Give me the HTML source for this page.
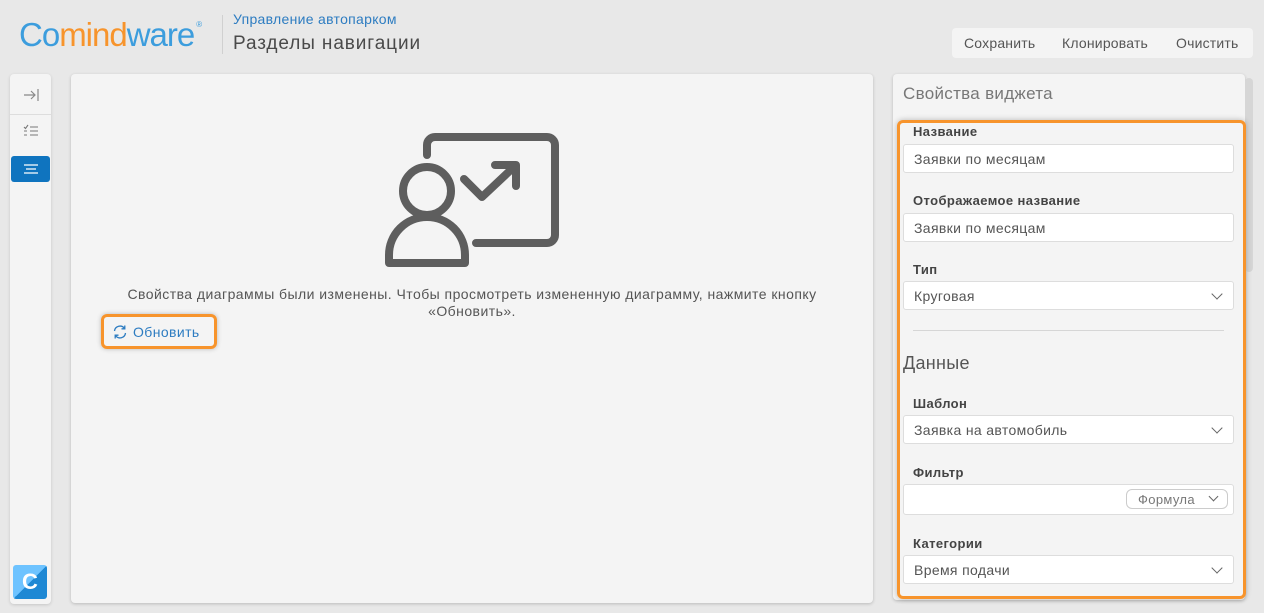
<!DOCTYPE html>
<html><head><meta charset="utf-8"><style>
*{box-sizing:border-box;margin:0;padding:0}
body{width:1264px;height:613px;overflow:hidden;background:#e8e8e8;font-family:"Liberation Sans",sans-serif;position:relative;color:#333}
.abs{position:absolute}
.logo{left:19px;top:16px;font-size:33px;letter-spacing:-1px;color:#3c9ddd}
.logo span{color:#f7942c}
.logo sup{font-size:8px;color:#3c9ddd;vertical-align:top;position:relative;top:4px;left:2px}
.sep{left:222px;top:15px;width:1px;height:39px;background:#d0d0d0}
.t1{left:233px;top:11px;font-size:14px;color:#2d7cc1;letter-spacing:.3px}
.t2{left:233px;top:33px;font-size:19px;color:#4a4a4a;letter-spacing:.9px}
.btns{left:952px;top:28px;width:301px;height:30px;background:#f4f4f4;border-radius:4px;font-size:14px;color:#555;letter-spacing:.2px}
.btns span{position:absolute;top:7px}
.side{left:10px;top:74px;width:41px;height:530px;background:#f4f4f4;border-radius:4px;box-shadow:0 1px 3px rgba(0,0,0,.15)}
.main{left:71px;top:74px;width:802px;height:529px;background:#f4f4f4;border-radius:4px;box-shadow:0 1px 3px rgba(0,0,0,.2)}
.right{left:893px;top:74px;width:352px;height:526px;background:#f4f4f4;border-radius:4px;box-shadow:0 1px 3px rgba(0,0,0,.2)}
.scroll{left:1245px;top:78px;width:8px;height:194px;background:#d6d6d6;border-radius:4px}
.orange{left:897px;top:120px;width:349px;height:479px;border:3px solid #f7942c;border-radius:6px;box-shadow:0 0 6px rgba(0,0,0,.25)}
.lbl{font-size:13px;font-weight:bold;color:#444;left:913px;letter-spacing:.4px}
.inp{left:903px;width:331px;height:29px;background:#fff;border:1px solid #ddd;border-radius:3px;font-size:14px;color:#555;padding:6px 0 0 10px;letter-spacing:.35px}
.chev{position:absolute;right:12px;top:8px;width:8px;height:8px;border-right:1.3px solid #666;border-bottom:1.3px solid #666;transform:rotate(45deg)}
</style></head><body>
<div class="abs logo">Co<span>mind</span>ware<sup>®</sup></div>
<div class="abs sep"></div>
<div class="abs t1">Управление автопарком</div>
<div class="abs t2">Разделы навигации</div>
<div class="abs btns"><span style="left:12px">Сохранить</span><span style="left:110px">Клонировать</span><span style="left:224px">Очистить</span></div>

<div class="abs side">
<svg class="abs" style="left:13px;top:14px" width="16" height="14" viewBox="0 0 16 14"><path d="M1 7H12M8 3L12 7L8 11M15 1V13" stroke="#888" stroke-width="1.2" fill="none"/></svg>
<div class="abs" style="left:0;top:40px;width:41px;height:1px;background:#ddd"></div>
<svg class="abs" style="left:13px;top:50px" width="16" height="14" viewBox="0 0 16 14"><path d="M1 3L2.5 4.5L5 1M7 3H15M7 7H15M7 11H15M1 7H4M1 11H4" stroke="#777" stroke-width="1.1" fill="none"/></svg>
<div class="abs" style="left:1px;top:82px;width:39px;height:26px;background:#0f74bf;border-radius:3px"></div>
<svg class="abs" style="left:13px;top:89px" width="16" height="12" viewBox="0 0 16 12"><path d="M1 2H15M3 6H13M1 10H15" stroke="#fff" stroke-width="1.2"/></svg>
<div class="abs" style="left:3px;top:491px;width:34px;height:34px;border-radius:3px;background:linear-gradient(135deg,#6ec3ff 50%,#1e88d4 50%);color:#fff;font-weight:bold;font-size:22px;text-align:center;line-height:34px">C</div>
</div>

<div class="abs main">
<svg class="abs" style="left:293px;top:45px" width="200" height="160" viewBox="0 0 200 160"><g stroke="#5e5e5e" stroke-width="8" fill="none" stroke-linecap="round" stroke-linejoin="round"><path d="M63 36V26a8 8 0 0 1 8-8h112a8 8 0 0 1 8 8v90a8 8 0 0 1-8 8H112"/><path d="M100 60L118 78L152 46M131 46H152V67"/><circle cx="63" cy="72" r="24"/><path d="M25 144V136a38 38 0 0 1 76 0V144Z"/></g></svg>
<div class="abs" style="left:0;width:802px;top:212px;text-align:center;font-size:14px;color:#555;line-height:17px;letter-spacing:.45px">Свойства диаграммы были изменены. Чтобы просмотреть измененную диаграмму, нажмите кнопку<br>«Обновить».</div>
<div class="abs" style="left:30px;top:240px;width:116px;height:35px;border:3px solid #f7942c;border-radius:6px;box-shadow:0 0 5px rgba(0,0,0,.25)"></div>
<svg class="abs" style="left:41px;top:250px" width="16" height="16" viewBox="0 0 16 16"><g stroke="#2d7cc1" stroke-width="1.3" fill="none"><path d="M2.5 7A5.5 5.5 0 0 1 12.5 4.5M13.5 9A5.5 5.5 0 0 1 3.5 11.5M12.8 1.5V4.8H9.5M3.2 14.5V11.2H6.5"/></g></svg>
<div class="abs" style="left:62px;top:250px;font-size:14px;color:#2d7cc1;letter-spacing:.4px">Обновить</div>
</div>

<div class="abs right"><div class="abs" style="left:10px;top:10px;font-size:17px;color:#777;letter-spacing:.3px">Свойства виджета</div></div>
<div class="abs scroll"></div>
<div class="abs orange"></div>

<div class="abs lbl" style="top:124px">Название</div>
<div class="abs inp" style="top:144px">Заявки по месяцам</div>
<div class="abs lbl" style="top:193px">Отображаемое название</div>
<div class="abs inp" style="top:213px">Заявки по месяцам</div>
<div class="abs lbl" style="top:262px">Тип</div>
<div class="abs inp" style="top:281px">Круговая<div class="chev"></div></div>
<div class="abs" style="left:913px;top:330px;width:311px;height:1px;background:#d6d6d6"></div>
<div class="abs" style="left:903px;top:353px;font-size:18px;color:#555;letter-spacing:.3px">Данные</div>
<div class="abs lbl" style="top:396px">Шаблон</div>
<div class="abs inp" style="top:415px">Заявка на автомобиль<div class="chev"></div></div>
<div class="abs lbl" style="top:465px">Фильтр</div>
<div class="abs inp" style="top:484px;height:31px"><div class="abs" style="left:222px;top:4px;width:102px;height:20px;border:1px solid #ccc;border-radius:6px;font-size:13px;color:#777;padding:2px 0 0 11px">Формула<div class="chev" style="right:10px;top:3px;width:7px;height:7px"></div></div></div>
<div class="abs lbl" style="top:536px">Категории</div>
<div class="abs inp" style="top:555px">Время подачи<div class="chev"></div></div>
</body></html>
